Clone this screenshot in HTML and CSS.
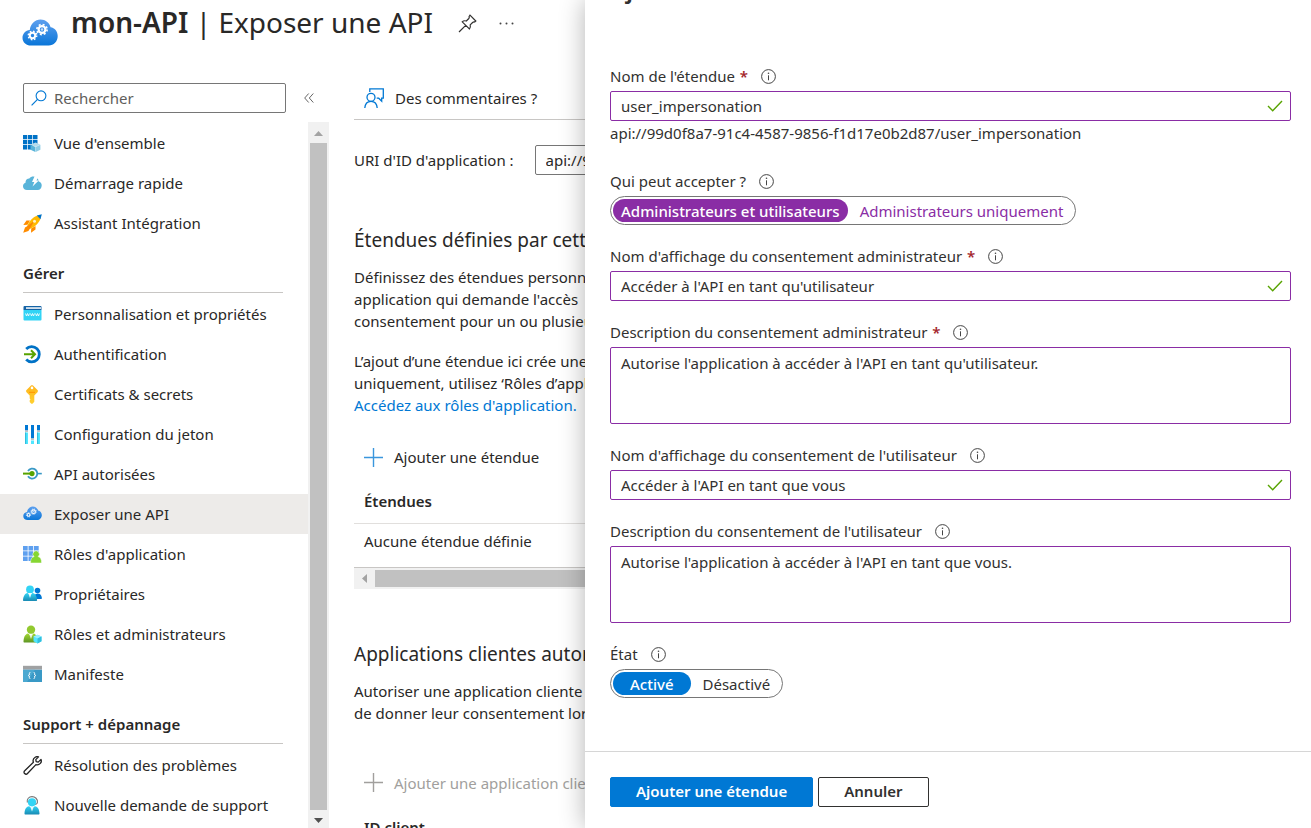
FILE: index.html
```html
<!DOCTYPE html>
<html lang="fr">
<head>
<meta charset="utf-8">
<title>mon-API | Exposer une API</title>
<link rel="stylesheet" href="styles.css">
</head>
<body>
<svg class="defs" aria-hidden="true">
  <defs>
    <linearGradient id="g-cloud" x1="0" y1="0" x2="0" y2="1"><stop offset="0" stop-color="#5ea0ef"/><stop offset="1" stop-color="#0a76d8"/></linearGradient>
    <linearGradient id="g-green" x1="0" y1="0" x2="0" y2="1"><stop offset="0" stop-color="#a4d833"/><stop offset="1" stop-color="#5e9624"/></linearGradient>
    <linearGradient id="g-cyan" x1="0" y1="0" x2="0" y2="1"><stop offset="0" stop-color="#32d4f5"/><stop offset="1" stop-color="#198ab3"/></linearGradient>
    <linearGradient id="g-key" x1="0" y1="0" x2="0" y2="1"><stop offset="0" stop-color="#ffb51b"/><stop offset="1" stop-color="#ffd02f"/></linearGradient>
  </defs>
  <symbol id="i-cloud" viewBox="0 0 36 27">
    <path fill="url(#g-cloud)" d="M9 26.500C4 26.500.5 23.200.5 18.700c0-4 3-7.400 7.300-7.800C8.500 5 13 .5 18.500.5c5 0 8.800 3.200 10.100 7.700 4 .5 7.100 4 7.100 8.800 0 5.500-4 9.500-9 9.500z"/>
    <g fill="none" stroke="#fff"><circle cx="20" cy="10.500" r="3.400" stroke-width="2.200"/><circle cx="20" cy="10.500" r="5.100" stroke-width="1.600" stroke-dasharray="2 2.005"/><circle cx="10.500" cy="16.500" r="2.700" stroke-width="2"/><circle cx="10.500" cy="16.500" r="4.200" stroke-width="1.500" stroke-dasharray="1.650 1.649"/></g>
    <circle cx="20" cy="10.500" r="1.200" fill="#fff" opacity=".7"/>
  </symbol>
  <symbol id="i-info" viewBox="0 0 15 15"><circle cx="7.500" cy="7.500" r="6.900" fill="none" stroke="#444"/><path d="M7.500 6.300v5" stroke="#444" fill="none"/><circle cx="7.500" cy="4.200" r=".8" fill="#444"/></symbol>
  <symbol id="i-check" viewBox="0 0 16 12"><path d="M1 6l4.700 4.700L15 1" fill="none" stroke="#57a300" stroke-width="1.400"/></symbol>
  <symbol id="i-plus" viewBox="0 0 19 19"><path d="M9.500 0v19M0 9.500h19" fill="none" stroke="currentColor" stroke-width="1.400"/></symbol>
</svg>

<div class="blade">
  <header class="title-bar">
    <svg class="title-icon" aria-hidden="true"><use href="#i-cloud"/></svg>
    <h1 class="title"><b>mon-API</b> | Exposer une API</h1>
    <button class="icon-button" type="button" aria-label="Épingler">
      <svg class="pin" viewBox="0 0 19 19" aria-hidden="true"><path d="M12 1.200l5.800 5.800-1.200 1c-.9-.2-1.400 0-2 .5l-2.400 2.400c.5 1.800.3 3-.8 4.100L4.200 7.800c1.100-1.100 2.400-1.300 4.100-.8l2.500-2.500c.5-.6.6-1.200.3-2zM7.700 11.300L1 18" fill="none" stroke="#323130" stroke-width="1.200"/></svg>
    </button>
    <button class="icon-button" type="button" aria-label="Plus">
      <svg class="dots" viewBox="0 0 15 3" aria-hidden="true"><g fill="#444"><circle cx="1.500" cy="1.500" r="1"/><circle cx="7.500" cy="1.500" r="1"/><circle cx="13.500" cy="1.500" r="1"/></g></svg>
    </button>
  </header>

  <div class="columns">
    <aside class="sidebar">
      <div class="search-row">
        <label class="search">
          <svg class="glass" viewBox="0 0 16 16" aria-hidden="true"><circle cx="10" cy="5.800" r="4.900" fill="none" stroke="#0078d4" stroke-width="1.100"/><path d="M6.500 9.300L.6 15.300" stroke="#0078d4" stroke-width="1.200"/></svg>
          <input class="search-input" type="text" placeholder="Rechercher" aria-label="Rechercher">
        </label>
        <button class="icon-button" type="button" aria-label="Réduire le menu">
          <svg class="chevrons" viewBox="0 0 10 10" aria-hidden="true"><path d="M4.700.5L.7 5l4 4.500M9.300.5L5.300 5l4 4.500" fill="none" stroke="#666"/></svg>
        </button>
      </div>
      <div class="menu-area">
        <nav class="menu">
          <a class="item" href="#"><svg class="ico" viewBox="0 0 19 19"><path fill="#0072c6" d="M0 1h4.300v4.300H0zM5 1h4.300v4.300H5zM10 1h4.500v4.300H10zM0 6h4.300v4.300H0zM5 6h4.300v4.300H5zM10 6h4.500v4.300H10zM0 11h4.300v4.500H0zM5 11h4.300v4.500H5z"/><path fill="#b5dcec" d="M12.500 8.500l4.800 2-4.800 2.200-4.800-2.200z"/><path fill="#59b4d9" d="M7.500 10.700l4.900 2.200V18l-4.900-2.300z"/><path fill="#8fcde5" d="M17.400 10.700l-4.800 2.200V18l4.800-2.300z"/></svg>Vue d'ensemble</a>
          <a class="item" href="#"><svg class="ico" viewBox="0 0 19 19"><path fill="#59b4d9" d="M4 16C1.600 16 0 14.400 0 12.200c0-1.700 1-3 2.500-3.500C2.300 6 4.200 4.500 6.300 4.500 7.500 3 9 2.400 10.500 2.500c3 .1 5 2.200 5.200 5 2 .4 3 2 3 4 0 2.700-1.700 4.500-4 4.500z"/><path fill="#fff" d="M11.500 2.500h4.200l-2.300 4h2.400L9.500 12.500l1.800-4.500H9z"/></svg>Démarrage rapide</a>
          <a class="item" href="#"><svg class="ico" viewBox="0 0 19 19"><path fill="#ff8c00" d="M7 6.500H3.500L.3 11l4.200-.2zM12.500 12v3.500L8 18.700l.2-4.200zM4.500 12L2 13.500.2 18.800l5.200-1.900L7 14.500z"/><path fill="#ffb900" d="M14.500 1.500C10 3 6 7 4 12.500L6.500 15C12 13 16 9 17.500 4.500z"/><path fill="#f7630c" d="M4 12.500L12 6l-5.500 9z" opacity=".6"/><path fill="#0072c6" d="M13.800 1.500L18.800.2l-1.300 5z"/><circle cx="11.500" cy="7.200" r="1.500" fill="#fff3c4"/></svg>Assistant Intégration</a>

          <h2 class="group">Gérer</h2>
          <a class="item" href="#"><svg class="ico" viewBox="0 0 19 19"><path fill="#32d4f5" d="M.5 5h18v9.500a1 1 0 0 1-1 1h-16a1 1 0 0 1-1-1z"/><path fill="#1463a5" d="M1.500 1h16a1 1 0 0 1 1 1v3H.5V2a1 1 0 0 1 1-1z"/><path fill="#fff" d="M3 2.300h15v1.500H3z"/><path d="M2.500 8.500l1 2.500 1-2.500 1 2.500 1-2.500M7.500 8.500l1 2.500 1-2.500 1 2.500 1-2.500M12.500 8.500l1 2.500 1-2.500 1 2.500 1-2.500" fill="none" stroke="#fff" stroke-width=".8"/></svg>Personnalisation et propriétés</a>
          <a class="item" href="#"><svg class="ico" viewBox="0 0 19 19"><path d="M3.200 4A7.600 7.600 0 1 1 3.200 14.500" fill="none" stroke="#0072c6" stroke-width="2.800"/><path d="M1 9.300h10.500M8 5.300l4 4-4 4" fill="none" stroke="#57a300" stroke-width="2"/></svg>Authentification</a>
          <a class="item" href="#"><svg class="ico" viewBox="0 0 19 19"><path fill="url(#g-key)" d="M8 .6c.6-.6 1.400-.6 2 0l4.500 4.500c.6.600.6 1.500 0 2.100L11.300 10.500v6.200L9.500 18.700H8.300L6.700 17v-1.700l.8-.9-.8-.9v-3L3.500 7.200c-.6-.6-.6-1.500 0-2.100z"/><circle cx="9" cy="2.900" r="1.300" fill="#fff"/><path fill="#ff9300" d="M6 6.800h6v1H6z"/></svg>Certificats &amp; secrets</a>
          <a class="item" href="#"><svg class="ico" viewBox="0 0 19 19"><path fill="#50e6ff" d="M2 7.500h3V19H2zM8 15.500h3V19H8zM14 7.500h3V19h-3z"/><path fill="#32bedd" d="M2 7.500h1.200V19H2zM14 7.500h1.200V19H14z"/><path fill="#0078d4" d="M2 0h3v5.500H2zM8 0h3v13.500H8zM14 0h3v5.500h-3z"/><path fill="#c3c3c3" d="M2 5.500h3v1.500H2zM8 13.500h3V15H8zM14 5.500h3v1.500h-3z"/></svg>Configuration du jeton</a>
          <a class="item" href="#"><svg class="ico" viewBox="0 0 19 19"><path d="M5 6A5 5 0 1 1 5 11.200" fill="none" stroke="#3999c6" stroke-width="1.800"/><path d="M14.500 8.600h4.300" stroke="#3999c6" stroke-width="1.600"/><path d="M0 8.600h8" stroke="#57a300" stroke-width="2"/><circle cx="9" cy="8.600" r="2.600" fill="#57a300"/></svg>API autorisées</a>
          <a class="item selected" href="#" aria-current="page"><svg class="ico" viewBox="0 0 19 19"><use href="#i-cloud" y="1" width="19" height="14.500"/></svg>Exposer une API</a>
          <a class="item" href="#"><svg class="ico" viewBox="0 0 19 19"><path fill="#5ea0ef" d="M0 1h4.700v4.500H0zM5.500 1h4.700v4.500H5.500zM11 1h4.700v4.500H11zM0 6.300h4.700v4.500H0zM5.500 6.300h4.700v4.500H5.500zM11 6.300h4.700v4.500H11zM0 11.500h4.700V16H0zM5.500 11.500h4V16h-4z"/><path fill="#86d633" stroke="#fff" stroke-width=".5" d="M7.500 18c0-3.500 1-5.800 3.600-6.400a3.200 3.200 0 1 1 4 0c2.500.6 3.500 2.900 3.500 6.400z"/></svg>Rôles d'application</a>
          <a class="item" href="#"><svg class="ico" viewBox="0 0 19 19"><circle cx="14.500" cy="5.500" r="2.800" fill="#0078d4"/><path fill="#0078d4" d="M11 14l1-4.500 2.300-1 2 .2c1.600.8 2.400 2.300 2.600 4.300 0 .6-.3 1-1 1z"/><circle cx="7" cy="4.500" r="3.900" fill="#32d4f5"/><path fill="url(#g-cyan)" d="M1 16c-.7 0-1-.4-1-1 .3-3.500 1.600-6.500 4.500-7L7 10l2.600-2c2.900.5 4.300 3.500 4.500 7 0 .6-.4 1-1 1z"/><path fill="#fff" d="M5.200 8h3.600L7 13z" opacity=".85"/></svg>Propriétaires</a>
          <a class="item" href="#"><svg class="ico" viewBox="0 0 19 19"><path fill="url(#g-green)" d="M1.500 17.500c-.7 0-1-.4-1-1C.8 12 2 9.200 5 8.500l2.800 2 2.700-2c3 .7 4 3.500 4.300 8 0 .6-.4 1-1 1z"/><circle cx="8" cy="4.700" r="4.200" fill="#92c92f"/><path fill="#fff" d="M6 8.700h4L8 14z" opacity=".8"/><path fill="#50e6ff" d="M14.500 9.800l4 1.800v4.600l-4 2.200-4-2.200v-4.600z"/><path fill="#9cebff" d="M14.500 9.800l4 1.800-4 1.800-4-1.800z"/><path fill="#32bedd" d="M14.500 13.400l4-1.800v4.600l-4 2.200z"/></svg>Rôles et administrateurs</a>
          <a class="item" href="#"><svg class="ico" viewBox="0 0 19 19"><path fill="#3999c6" d="M0 4.500h19v12.500H0z"/><path fill="#59b4d9" d="M0 4.500h12L4 17H0z" opacity=".6"/><path fill="#a0a1a2" d="M0 .8h19v3.700H0z"/><path d="M7.300 7.500c-1.300 0-.9.700-.9 1.500 0 .9-.2 1.300-1 1.500.8.200 1 .6 1 1.500 0 .8-.4 1.500.9 1.500M10.700 7.500c1.300 0 .9.700.9 1.500 0 .9.200 1.300 1 1.500-.8.200-1 .6-1 1.500 0 .8.400 1.500-.9 1.500" fill="none" stroke="#fff"/></svg>Manifeste</a>

          <h2 class="group">Support + dépannage</h2>
          <a class="item" href="#"><svg class="ico" viewBox="0 0 19 19"><path d="M12.200 1.200c1-.6 2.200-.7 3.300-.3l-2.700 2.700.4 2 2 .5L18 3.400c.7 2-.1 4-1.800 4.900-1 .6-2.200.7-3.300.3L4.500 17.500c-.8.900-2 .9-2.900.1-.8-.8-.8-2.100.1-2.900l8.700-8.400c-.7-2 .1-4.100 1.800-5.100z" fill="none" stroke="#222" stroke-width="1.300" stroke-linejoin="round"/></svg>Résolution des problèmes</a>
          <a class="item" href="#"><svg class="ico" viewBox="0 0 19 19"><path d="M4.300 6.500C3.500 3 6 .6 9 .6s6 2.400 5.400 5.900c-.2 1.400-1.500 2-3 2" fill="none" stroke="#767676" stroke-width="1.100"/><path fill="url(#g-cyan)" d="M2.500 18.500c-.7 0-1-.4-1-1C1.700 13.500 3 10.700 6 10.200l3 1.500 3-1.500c3 .5 4.300 3.300 4.500 7.300 0 .6-.3 1-1 1z"/><circle cx="9" cy="6.300" r="4.100" fill="#32d4f5"/><path fill="#fff" d="M7.300 11h3.400L9 15.500z" opacity=".85"/></svg>Nouvelle demande de support</a>
        </nav>
        <div class="vbar" aria-hidden="true">
          <svg class="arrow" viewBox="0 0 21 21"><path d="M6 14l4.500-5 4.500 5z" fill="#a3a3a3"/></svg>
          <div class="vthumb"></div>
          <svg class="arrow-end" viewBox="0 0 21 18"><path d="M6 8l4.500 5L15 8z" fill="#505050"/></svg>
        </div>
      </div>
    </aside>

    <main class="content">
      <div class="toolbar">
        <button class="command" type="button"><svg class="feedback" viewBox="0 0 20 20" aria-hidden="true"><g fill="none" stroke="#0078d4" stroke-width="1.300"><path d="M5.800 4V.9h13.500v9.300h-1.600v3l-3-3h-2"/><circle cx="7" cy="9.300" r="4"/><path d="M.8 20c.3-4 2.700-6.700 6.200-6.700s5.900 2.700 6.200 6.700"/></g></svg>Des commentaires ?</button>
      </div>
      <div class="uri-row">
        <label for="uri">URI d'ID d'application :</label>
        <input class="uri-input" id="uri" type="text" value="api://99d0f8a7" readonly>
      </div>

      <h2 class="section">Étendues définies par cette API</h2>
      <p class="para">Définissez des étendues personnalisées<br>application qui demande l'accès<br>consentement pour un ou plusieurs</p>
      <p class="para para-next">L’ajout d’une étendue ici crée une<br>uniquement, utilisez ‘Rôles d’application<br><a class="link" href="#">Accédez aux rôles d'application.</a></p>
      <button class="command add" type="button"><svg class="plus" aria-hidden="true"><use href="#i-plus"/></svg>Ajouter une étendue</button>
      <table class="grid">
        <thead><tr><th>Étendues</th></tr></thead>
        <tbody><tr><td>Aucune étendue définie</td></tr></tbody>
      </table>
      <div class="hbar" aria-hidden="true">
        <svg class="arrow" viewBox="0 0 21 21"><path d="M13 6l-5 4.500 5 4.500z" fill="#a3a3a3"/></svg>
        <div class="hthumb"></div>
      </div>

      <h2 class="section">Applications clientes autorisées</h2>
      <p class="para">Autoriser une application cliente<br>de donner leur consentement lors</p>
      <button class="command add-client" type="button" disabled><svg class="plus" aria-hidden="true"><use href="#i-plus"/></svg>Ajouter une application cliente</button>
      <table class="grid">
        <thead><tr><th>ID client</th></tr></thead>
      </table>
    </main>
  </div>
</div>

<form class="panel">
  <h2 class="panel-title">Ajouter une étendue</h2>
  <div class="fields">
    <div class="field">
      <div class="caption"><label for="scope">Nom de l'étendue <span class="star">*</span></label><svg class="info" aria-hidden="true"><use href="#i-info"/></svg></div>
      <div class="box"><input class="box-input" id="scope" type="text" value="user_impersonation"><svg class="check" aria-hidden="true"><use href="#i-check"/></svg></div>
      <div class="hint">api://99d0f8a7-91c4-4587-9856-f1d17e0b2d87/user_impersonation</div>
    </div>
    <div class="field" role="radiogroup" aria-labelledby="who">
      <div class="caption"><span id="who">Qui peut accepter ?</span><svg class="info" aria-hidden="true"><use href="#i-info"/></svg></div>
      <div class="toggle purple">
        <label class="option"><input class="radio" type="radio" name="who" checked>Administrateurs et utilisateurs</label>
        <label class="option"><input class="radio" type="radio" name="who">Administrateurs uniquement</label>
      </div>
    </div>
    <div class="field">
      <div class="caption"><label for="admin-name">Nom d'affichage du consentement administrateur <span class="star">*</span></label><svg class="info" aria-hidden="true"><use href="#i-info"/></svg></div>
      <div class="box"><input class="box-input" id="admin-name" type="text" value="Accéder à l'API en tant qu'utilisateur"><svg class="check" aria-hidden="true"><use href="#i-check"/></svg></div>
    </div>
    <div class="field">
      <div class="caption"><label for="admin-desc">Description du consentement administrateur <span class="star">*</span></label><svg class="info" aria-hidden="true"><use href="#i-info"/></svg></div>
      <textarea class="area" id="admin-desc">Autorise l'application à accéder à l'API en tant qu'utilisateur.</textarea>
    </div>
    <div class="field">
      <div class="caption"><label for="user-name">Nom d'affichage du consentement de l'utilisateur</label><svg class="info" aria-hidden="true"><use href="#i-info"/></svg></div>
      <div class="box"><input class="box-input" id="user-name" type="text" value="Accéder à l'API en tant que vous"><svg class="check" aria-hidden="true"><use href="#i-check"/></svg></div>
    </div>
    <div class="field">
      <div class="caption"><label for="user-desc">Description du consentement de l'utilisateur</label><svg class="info" aria-hidden="true"><use href="#i-info"/></svg></div>
      <textarea class="area" id="user-desc">Autorise l'application à accéder à l'API en tant que vous.</textarea>
    </div>
    <div class="field" role="radiogroup" aria-labelledby="state">
      <div class="caption"><span id="state">État</span><svg class="info" aria-hidden="true"><use href="#i-info"/></svg></div>
      <div class="toggle blue">
        <label class="option"><input class="radio" type="radio" name="state" checked>Activé</label>
        <label class="option"><input class="radio" type="radio" name="state">Désactivé</label>
      </div>
    </div>
  </div>
  <footer class="actions">
    <button class="button primary" type="button">Ajouter une étendue</button>
    <button class="button" type="button">Annuler</button>
  </footer>
</form>
</body>
</html>
```
FILE: styles.css
```css
* { box-sizing: border-box; }

body {
  margin: 0;
  height: 100vh;
  position: relative;
  overflow: hidden;
  background: #fff;
  color: #292827;
  font: 15px/20px "Noto Sans", "Open Sans", sans-serif;
}

h1, h2, p { margin: 0; }
button, input, textarea { font: inherit; color: inherit; }
svg { flex: none; }
.defs { position: absolute; width: 0; height: 0; }

.blade { display: flex; flex-direction: column; height: 100%; white-space: nowrap; }

.title-bar { display: flex; align-items: center; height: 83px; padding: 0 0 36px 22px; }
.title-icon { width: 36px; height: 27px; margin: 18px 13px 0 0; }
.title { padding-bottom: 3px; font-size: 28px; line-height: 36px; font-weight: 400; margin-right: 25px; }
.title b { font-weight: 600; }
.icon-button { display: flex; padding: 0; border: 0; background: none; }
.pin { width: 19px; height: 19px; margin-right: 22px; }
.dots { width: 15px; height: 3px; }

.columns { display: flex; flex: 1; min-height: 0; }
.sidebar { display: flex; flex-direction: column; width: 329px; flex: none; }
.search-row { display: flex; align-items: center; gap: 18px; padding-left: 23px; }
.search { display: flex; align-items: center; gap: 7px; width: 263px; height: 30px; padding: 0 7px; border: 1px solid #767676; border-radius: 2px; }
.glass { width: 16px; height: 16px; }
.search-input { flex: 1; min-width: 0; padding: 0; border: 0; outline: 0; background: none; }
.search-input::placeholder { color: #605e5c; opacity: 1; }
.chevrons { width: 10px; height: 10px; }

.menu-area { display: flex; flex: 1; min-height: 0; margin-top: 9px; }
.menu { flex: 1; padding-top: 1px; overflow: hidden; }
.item { display: flex; align-items: center; gap: 12px; height: 40px; padding-left: 23px; color: inherit; text-decoration: none; }
.item.selected { background: #edebe9; }
.ico { width: 19px; height: 19px; }
.group { margin: 20px 25px 1px 23px; padding-bottom: 9px; border-bottom: 1px solid #c8c6c4; font-size: 15px; line-height: 20px; font-weight: 600; }

.vbar { display: flex; flex-direction: column; width: 21px; background: #f1f1f1; }
.arrow { width: 21px; height: 21px; }
.arrow-end { width: 21px; height: 18px; }
.vthumb { flex: 1; margin: 0 2px; background: #c1c1c1; }

.content { flex: 1; min-width: 0; padding-left: 25px; overflow: hidden; }
.toolbar { height: 37px; border-bottom: 1px solid #c8c6c4; }
.command { display: flex; align-items: center; gap: 11px; height: 30px; padding: 0 10px; border: 0; background: none; }
.command:disabled { color: #a19f9d; }
.feedback { width: 20px; height: 20px; }
.plus { width: 19px; height: 19px; color: #3a96dd; }
.command:disabled .plus { color: #a19f9d; }
.add { margin-top: 26px; }
.add-client { margin-top: 44px; }

.uri-row { display: flex; align-items: center; gap: 21px; margin-top: 25px; }
.uri-input { width: 400px; height: 30px; padding: 0 10px; border: 1px solid #767676; border-radius: 2px; }

.section { margin-top: 52px; font-size: 19px; line-height: 26px; font-weight: 400; }
.para { margin-top: 13px; line-height: 22px; }
.para-next { margin-top: 18px; }
.link { color: #0078d4; text-decoration: none; }

.grid { width: 100%; border-collapse: collapse; }
.grid th { height: 51px; padding: 8px 10px 0; text-align: left; font-weight: 600; border-bottom: 1px solid #e1dfdd; }
.grid td { height: 44px; padding: 0 10px 8px; border-bottom: 1px solid #c8c6c4; }
.hbar { display: flex; height: 21px; background: #f1f1f1; }
.hthumb { flex: 1; margin: 2px 0; background: #c1c1c1; }

.panel { position: absolute; inset: 0 0 0 585px; display: flex; flex-direction: column; background: #fff; box-shadow: 0 0 24px rgba(0, 0, 0, .3); color: #323130; }
.panel-title { margin: -28px 25px 0; font-size: 24px; line-height: 34px; font-weight: 600; }
.fields { display: flex; flex-direction: column; gap: 21px; flex: 1; padding: 60px 20px 0 25px; }
.caption { display: flex; align-items: center; gap: 13px; height: 20px; margin-bottom: 5px; }
.star { margin-left: 1px; color: #a4262c; font-weight: 600; }
.info { width: 15px; height: 15px; }
.box { display: flex; align-items: center; height: 30px; padding: 0 7px 0 10px; border: 1px solid #8a2da5; border-radius: 2px; }
.box-input { flex: 1; min-width: 0; padding: 0; border: 0; outline: 0; background: none; }
.check { width: 16px; height: 12px; }
.hint { padding: 2px 0 7px; }
.area { display: block; width: 100%; height: 77px; padding: 5px 10px; border: 1px solid #8a2da5; border-radius: 2px; outline: 0; resize: none; }

.toggle { display: inline-flex; align-items: center; height: 29px; padding: 0 2px; border: 1px solid #767676; border-radius: 15px; vertical-align: top; }
.option { position: relative; display: flex; align-items: center; height: 23px; padding: 0 10px 0 12px; border-radius: 12px; }
.radio { position: absolute; inset: 0; margin: 0; opacity: 0; }
.option:has(:checked) { padding: 0 10px; color: #fff; font-weight: 500; }
.purple .option { color: #8a2da5; }
.purple .option:has(:checked) { padding: 0 8px; background: #8a2da5; color: #fff; }
.blue .option:has(:checked) { padding: 0 17px; background: #0078d4; }

.actions { display: flex; gap: 5px; padding: 25px 25px 21px; border-top: 1px solid #d6d6d6; }
.button { height: 30px; padding: 0 25px 2px; border: 1px solid #323130; border-radius: 2px; background: #fff; font-weight: 600; }
.primary { border-color: #0078d4; background: #0078d4; color: #fff; }
```
